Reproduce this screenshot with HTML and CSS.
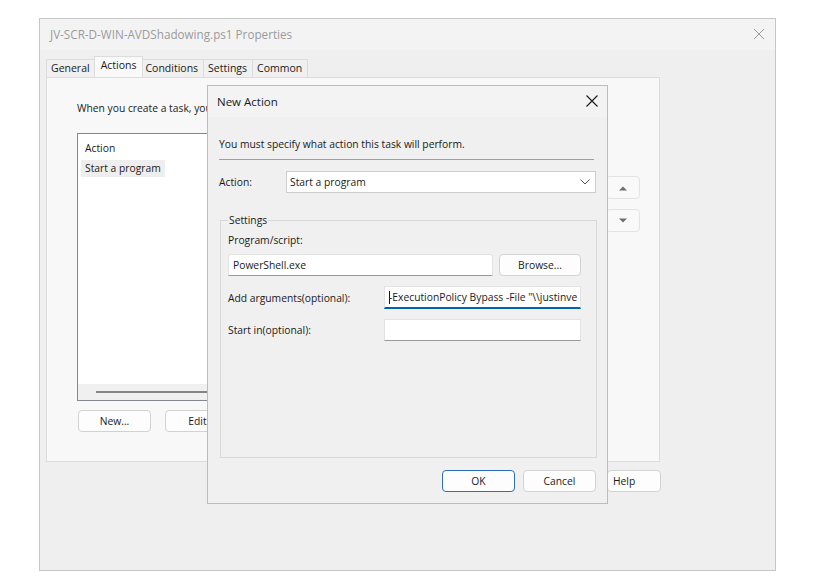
FILE: index.html
```html
<!DOCTYPE html>
<html>
<head>
<meta charset="utf-8">
<link rel="stylesheet" href="styles.css">
</head>
<body>
<div class="window">
  <div class="titlebar">
    <span class="title">JV-SCR-D-WIN-AVDShadowing.ps1 Properties</span>
    <svg class="close-x" width="12" height="12" viewBox="0 0 12 12"><path d="M1 1L11 11M11 1L1 11" stroke="#9a9a9a" stroke-width="1"/></svg>
  </div>
  <div class="tabs">
    <div class="tab">General</div>
    <div class="tab active">Actions</div>
    <div class="tab">Conditions</div>
    <div class="tab">Settings</div>
    <div class="tab">Common</div>
  </div>
  <div class="panel">
    <p class="intro">When you create a task, you must specify the action that will occur when your task starts.</p>
    <div class="panel-body">
      <div class="listbox">
        <div class="list-head">Action</div>
        <div class="list-row"><span class="sel">Start a program</span></div>
        <div class="list-spacer"></div>
        <div class="hscroll"><div class="thumb"></div></div>
      </div>
      <div class="side-btns">
        <div class="arrow-btn"><svg width="10" height="6" viewBox="0 0 10 6"><path d="M1 5.5L5 1.5L9 5.5Z" fill="#6e6e6e"/></svg></div>
        <div class="arrow-btn"><svg width="10" height="6" viewBox="0 0 10 6"><path d="M1 0.5L5 4.5L9 0.5Z" fill="#6e6e6e"/></svg></div>
      </div>
    </div>
    <div class="list-btns">
      <div class="btn">New...</div>
      <div class="btn">Edit...</div>
    </div>
  </div>
  <div class="bottom-row">
    <div class="btn help">Help</div>
  </div>
</div>

<div class="dialog">
  <div class="d-titlebar">
    <span class="d-title">New Action</span>
    <svg class="d-close" width="12" height="12" viewBox="0 0 12 12"><path d="M0.5 0.5L11.5 11.5M11.5 0.5L0.5 11.5" stroke="#1a1a1a" stroke-width="1.1"/></svg>
  </div>
  <div class="d-body">
    <p class="d-intro">You must specify what action this task will perform.</p>
    <div class="sep"></div>
    <div class="action-row">
      <span class="lbl">Action:</span>
      <div class="combo">
        <span>Start a program</span>
        <svg width="10" height="6" viewBox="0 0 10 6"><path d="M0.5 0.5L5 5L9.5 0.5" fill="none" stroke="#555" stroke-width="1"/></svg>
      </div>
    </div>
    <fieldset class="group">
      <legend>Settings</legend>
      <div class="g-label">Program/script:</div>
      <div class="prog-row">
        <div class="field prog">PowerShell.exe</div>
        <div class="btn browse">Browse...</div>
      </div>
      <div class="arg-row">
        <span class="lbl">Add arguments(optional):</span>
        <div class="field args focused"><span class="caret"></span><span class="clip">-ExecutionPolicy Bypass -File "\\justinve</span></div>
      </div>
      <div class="arg-row">
        <span class="lbl">Start in(optional):</span>
        <div class="field args"></div>
      </div>
    </fieldset>
    <div class="d-btns">
      <div class="btn ok">OK</div>
      <div class="btn">Cancel</div>
    </div>
  </div>
</div>
</body>
</html>
```

FILE: styles.css
```css
* { box-sizing: border-box; }
html, body { margin: 0; padding: 0; background: #ffffff; }
body {
  font-family: "Open Sans", "Noto Sans", sans-serif;
  font-size: 10.3px;
  color: #1a1a1a;
  width: 820px;
  height: 585px;
  position: relative;
  overflow: hidden;
}
p { margin: 0; }

.window {
  position: absolute;
  left: 39px;
  top: 18px;
  width: 737px;
  height: 553px;
  background: #efefef;
  border: 1px solid #c6c6c6;
  display: flex;
  flex-direction: column;
}
.titlebar {
  height: 31px;
  background: #f3f3f3;
  display: flex;
  align-items: center;
  justify-content: space-between;
  padding: 0 10px 2px 10px;
  flex-shrink: 0;
}
.title { color: #9b9b9b; font-size: 11.7px; }

.tabs {
  display: flex;
  align-items: flex-end;
  height: 27px;
  padding-left: 6px;
  flex-shrink: 0;
}
.tab {
  height: 18px;
  line-height: 17px;
  border: 1px solid #dcdcdc;
  border-bottom: none;
  background: #f0f0f0;
  padding: 0 5px 0 4px;
  margin-left: -1px;
  font-size: 10.5px;
}
.tab:first-child { margin-left: 0; }
.tab.active {
  height: 21px;
  background: #f9f9f9;
  margin-left: -2px;
  margin-right: -2px;
  padding: 0 6px 0 6px;
  line-height: 16px;
  position: relative;
  z-index: 1;
}
.panel {
  margin-left: 6px;
  width: 614px;
  height: 385px;
  background: #f8f8f8;
  border: 1px solid #dcdcdc;
  padding: 22px 0 0 30px;
  display: flex;
  flex-direction: column;
  flex-shrink: 0;
}
.intro { white-space: nowrap; line-height: 16px; }
.panel-body {
  display: flex;
  margin-top: 17px;
}
.listbox {
  width: 460px;
  height: 268px;
  border: 1px solid #828790;
  background: #ffffff;
  display: flex;
  flex-direction: column;
  padding-top: 6px;
}
.list-head { padding-left: 7px; height: 20px; line-height: 17px; }
.list-row { padding-left: 3px; }
.sel { display: inline-block; background: #eeeeee; padding: 0 4px; height: 17px; line-height: 17px; white-space: nowrap; }
.list-spacer { flex: 1; }
.hscroll {
  height: 16px;
  background: #f0f0f0;
  padding: 7px 0 0 18px;
}
.thumb { height: 2px; width: 400px; background: #858585; }

.side-btns {
  display: flex;
  flex-direction: column;
  gap: 10px;
  margin-left: 69px;
  margin-top: 43px;
}
.arrow-btn {
  width: 34px;
  height: 23px;
  border: 1px solid #e3e3e3;
  border-radius: 4px;
  background: #f9f9f9;
  display: flex;
  align-items: center;
  justify-content: center;
}

.list-btns { display: flex; gap: 14px; margin-top: 9px; margin-left: 1px; }
.btn {
  height: 22px;
  width: 73px;
  border: 1px solid #d2d2d2;
  border-radius: 4px;
  background: #fdfdfd;
  display: flex;
  align-items: center;
  justify-content: center;
}
.bottom-row {
  display: flex;
  justify-content: flex-end;
  padding-right: 114px;
  margin-top: 8px;
}
.help { width: 54px; justify-content: flex-start; padding-left: 5px; }

.dialog {
  position: absolute;
  left: 207px;
  top: 85px;
  width: 401px;
  height: 419px;
  background: #f0f0f0;
  border: 1px solid #bcbcbc;
  display: flex;
  flex-direction: column;
}
.d-titlebar {
  height: 31px;
  background: #f3f3f3;
  display: flex;
  align-items: center;
  justify-content: space-between;
  padding: 0 9px 1px 9px;
  flex-shrink: 0;
}
.d-title { font-size: 11.5px; color: #1a1a1a; }
.d-body { padding: 19px 11px 0 11px; display: flex; flex-direction: column; }
.d-intro { line-height: 16px; }
.sep { height: 1px; background: #a0a0a0; margin-top: 7px; width: 375px; }
.action-row {
  display: flex;
  align-items: center;
  margin-top: 11px;
  height: 22px;
}
.action-row .lbl { width: 67px; }
.combo {
  width: 310px;
  height: 22px;
  background: #ffffff;
  border: 1px solid #cdcdcd;
  display: flex;
  align-items: center;
  justify-content: space-between;
  padding: 0 5px 0 3px;
}
.group {
  margin: 20px 0 0 1px;
  width: 377px;
  height: 245px;
  border: 1px solid #d8d8d8;
  padding: 0 0 0 7px;
  min-width: 0;
}
.group legend { padding: 0 1px; margin-left: 0; line-height: 14px; }
.g-label { margin-top: 6px; line-height: 14px; }
.prog-row { display: flex; gap: 6px; margin-top: 7px; }
.field {
  height: 22px;
  background: #ffffff;
  border: 1px solid #e3e3e3;
  border-bottom-color: #9a9a9a;
  display: flex;
  align-items: center;
  padding-left: 4px;
  overflow: hidden;
  white-space: nowrap;
}
.prog { width: 265px; border-radius: 3px 3px 0 0; }
.browse { width: 82px; }
.arg-row { display: flex; align-items: center; margin-top: 10px; }
.arg-row .lbl { width: 156px; }
.args { width: 197px; }
.focused { border-bottom: 2px solid #0063b1; height: 23px; padding-left: 4px; }
.caret { display: inline-block; width: 1px; height: 13px; background: #1a1a1a; margin-right: -1px; }
.d-btns { display: flex; gap: 8px; justify-content: flex-end; margin-top: 12px; }
.ok { border-color: #2a6dc1; }
```
